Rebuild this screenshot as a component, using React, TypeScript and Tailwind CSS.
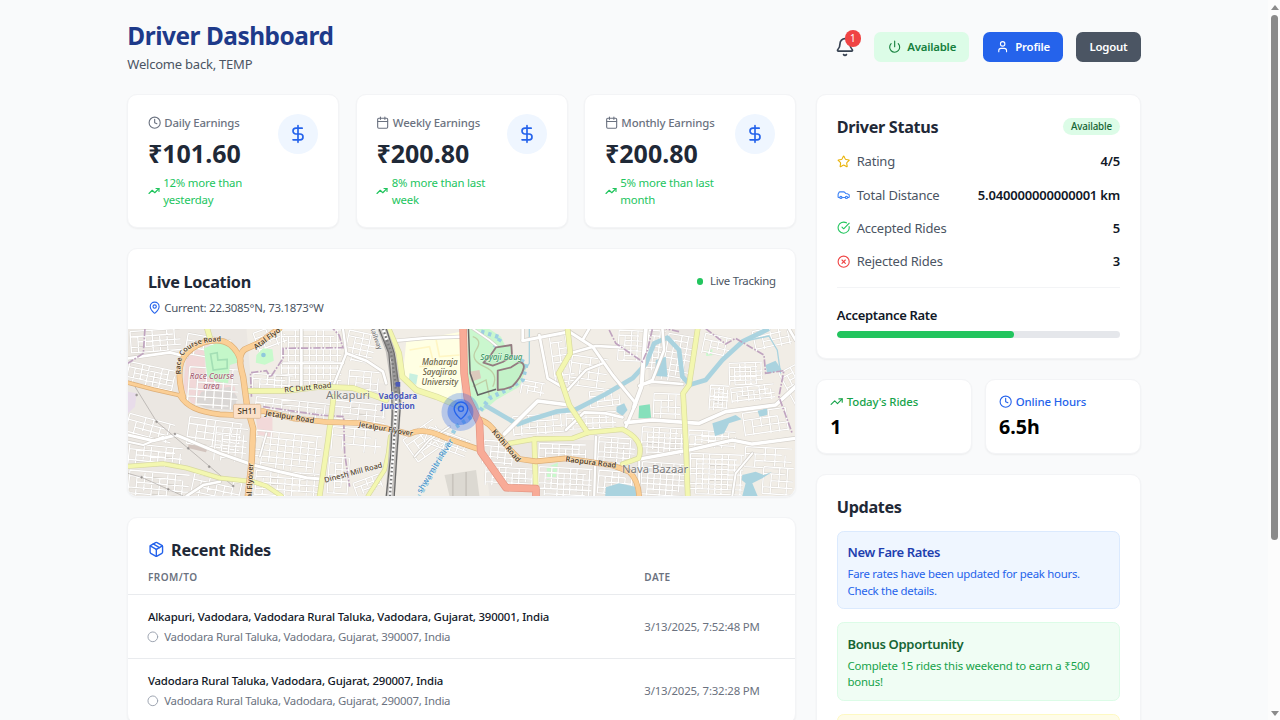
import type { ReactNode } from "react";
import {
  Bell, Calendar, Car, Circle, CircleCheckBig, CircleX, Clock, DollarSign,
  MapPin, Package, Power, Star, TrendingUp, User,
} from "lucide-react";

const card = "rounded-[10px] border border-[#f3f4f6] bg-white shadow-[0_1px_2px_rgba(0,0,0,0.05)]";
const heading = "-mb-px pt-px text-[16.2px] leading-[23.3px] font-bold text-[#1f2937]";

/* ---------- Map ---------- */

type Street = { d: string; w: number };

const whiteRoads: Street[] = [
  { d: "M24 585 L100 602 L170 585 L300 640 L400 675 L480 695 L560 713 L612 718", w: 9 },
  { d: "M24 355 L150 337 L200 350", w: 8 },
  { d: "M24 605 L70 615 L130 590", w: 6 },
  { d: "M545 266 V440", w: 8 },
  { d: "M490 370 H670", w: 6 },
  { d: "M670 266 L680 340 L640 440", w: 7 },
  { d: "M680 340 L740 362 L790 395 L800 430", w: 8 },
  { d: "M830 302 L920 294 L1025 290", w: 8 },
  { d: "M200 768 L250 735 L300 725", w: 8 },
  { d: "M440 580 L420 650", w: 5 },
  { d: "M1170 350 L1110 300 L1060 266", w: 5 },
  { d: "M1210 302 L1350 275 L1420 320 L1480 405 L1550 490 L1520 560", w: 9 },
  { d: "M1260 285 L1285 415 L1345 450", w: 8 },
  { d: "M1345 450 L1400 390 L1450 370", w: 7 },
  { d: "M1155 582 L1255 483 L1350 495", w: 11 },
  { d: "M1580 266 L1567 440 L1545 500", w: 12 },
  { d: "M1630 266 L1635 330 L1600 420 L1560 437 L1600 425 L1690 432", w: 8 },
  { d: "M1340 570 L1395 517 L1460 520 L1510 532", w: 8 },
  { d: "M1520 548 L1600 540 L1740 550 L1820 515 L1970 495 L2030 440", w: 11 },
  { d: "M1560 657 L1710 630 L1840 600 L1900 612 L2030 595", w: 10 },
  { d: "M1353 340 L1430 318 L1510 322", w: 8 },
  { d: "M1430 590 L1425 768", w: 7 },
  { d: "M1210 266 V300", w: 8 },
  { d: "M1390 300 L1410 266", w: 8 },
  { d: "M2010 266 L2030 300", w: 8 },
  { d: "M885 650 L930 600 L990 560", w: 5 },
  { d: "M1560 660 V768", w: 6 },
  { d: "M1840 768 L1850 700 L1900 640", w: 6 },
];

const yellowRoads: Street[] = [
  { d: "M262 266 L272 300", w: 14 },
  { d: "M388 453 L500 452 L600 440 L700 444 L800 480", w: 14 },
  { d: "M642 470 L625 600 L600 768", w: 13 },
  { d: "M24 679 L130 671 L200 684 L300 714 L400 725 L440 738 L485 768", w: 11 },
  { d: "M806 266 L838 340 L848 410 L890 450 L950 470 L1015 497", w: 15 },
  { d: "M745 768 L795 690 L806 640 L812 590", w: 10 },
  { d: "M1345 266 L1353 340 L1318 400 L1350 495 L1405 578", w: 13 },
  { d: "M1170 610 L1245 597 L1360 595 L1405 578 L1510 568 C1555 590 1572 620 1558 655 L1510 672", w: 12 },
  { d: "M1245 597 L1250 768", w: 13 },
  { d: "M1736 266 L1710 435 L1692 460 L1700 600 L1706 768", w: 13 },
];

const orangeRoads: Street[] = [
  { d: "M24 428 L100 448 L180 466", w: 9 },
  { d: "M180 466 C200 500 235 515 300 523 L345 525 L430 513 L520 535 L620 546 L720 549 L800 565 L870 582 C900 565 940 575 975 592 L1020 608 L1085 630", w: 13 },
  { d: "M190 472 C175 420 172 370 200 340 C240 300 300 290 332 315 C352 332 358 345 362 362", w: 14 },
  { d: "M478 266 L420 308 L375 328 C352 345 362 380 370 410 L382 500 L400 565 L396 660 L384 768", w: 15 },
  { d: "M1075 537 C1120 545 1130 590 1200 657 L1250 664 L1340 655 L1480 676 L1530 695 C1552 715 1558 740 1560 768", w: 13 },
];

/* x, y, width, height, rotation, column step, row step */
const blocks: number[][] = [
  [30, 275, 150, 65, -4, 22, 16], [30, 365, 140, 60, 12, 20, 15], [205, 280, 130, 60, 10, 26, 20],
  [210, 380, 150, 120, 4, 26, 22], [400, 280, 90, 60, -20, 20, 18], [485, 270, 180, 165, 0, 21, 19],
  [400, 400, 120, 45, 4, 22, 15], [690, 270, 85, 90, 12, 22, 17], [690, 390, 90, 60, 5, 22, 18],
  [410, 470, 230, 50, 6, 26, 16], [645, 480, 155, 60, 6, 25, 18], [30, 520, 140, 60, 15, 25, 18],
  [30, 610, 160, 60, 6, 22, 16], [210, 530, 160, 80, 8, 26, 20], [290, 560, 95, 100, 5, 21, 18],
  [410, 570, 200, 110, 6, 23, 19], [30, 690, 180, 75, 5, 23, 17], [225, 700, 145, 65, 12, 24, 18],
  [410, 690, 190, 75, 4, 22, 18], [640, 560, 150, 70, 5, 33, 24], [630, 650, 60, 110, 4, 20, 18],
  [700, 730, 80, 40, -20, 20, 15], [850, 600, 110, 80, -35, 26, 20], [930, 560, 130, 50, 20, 20, 16],
  [1095, 600, 90, 70, 5, 22, 16], [1100, 680, 140, 55, 3, 20, 15], [1180, 530, 160, 60, -4, 24, 18],
  [1260, 610, 140, 45, 2, 20, 14], [1260, 680, 160, 85, 3, 19, 16], [1440, 590, 110, 75, 4, 19, 15],
  [1440, 690, 100, 70, 5, 20, 17], [1340, 520, 150, 50, -2, 20, 16], [1410, 455, 90, 50, -6, 22, 16],
  [1290, 290, 60, 140, -8, 24, 20], [1360, 345, 110, 90, 8, 28, 22], [1210, 420, 70, 40, 10, 20, 14],
  [1500, 270, 80, 90, 3, 19, 15], [1590, 270, 50, 120, 5, 17, 16], [1650, 280, 80, 140, 10, 20, 18],
  [1605, 460, 80, 75, 2, 22, 20], [1570, 560, 125, 80, 3, 17, 15], [1570, 665, 130, 100, 4, 19, 16],
  [1710, 570, 140, 50, 3, 20, 14], [1715, 640, 160, 120, 2, 19, 15], [1775, 435, 55, 75, 4, 13, 11],
  [1830, 370, 100, 65, -2, 16, 13], [1835, 445, 130, 45, -6, 17, 13], [1870, 520, 130, 70, -8, 26, 22],
  [1880, 620, 140, 60, 3, 30, 20], [1935, 680, 90, 80, 4, 24, 20], [1980, 400, 60, 180, -28, 19, 17],
  [1760, 280, 80, 60, 12, 22, 18], [1900, 275, 110, 60, -12, 26, 18],
];

const blockPath = ([, , w, h, , sx, sy]: number[]) => {
  let d = "";
  for (let x = 0, i = 0; x <= w; x += sx, i++) d += `M${x} ${i % 3 === 1 ? sy : 0}V${i % 4 === 2 ? h - sy : h}`;
  for (let y = 0, i = 0; y <= h; y += sy, i++) d += `M${i % 3 === 2 ? sx : 0} ${y}H${i % 4 === 1 ? w - sx : w}`;
  return d;
};

function Roads({ items, casing, fill }: { items: Street[]; casing: string; fill: string }) {
  return (
    <g fill="none" strokeLinejoin="round" strokeLinecap="round">
      {items.map((r, i) => <path key={i} d={r.d} stroke={casing} strokeWidth={r.w + 4} />)}
      {items.map((r, i) => <path key={i} d={r.d} stroke={fill} strokeWidth={r.w} />)}
    </g>
  );
}

function CityMap() {
  return (
    <svg viewBox="24 267 2004 500" preserveAspectRatio="none" className="block h-[166.7px] w-full font-['Noto_Sans',sans-serif]">
      <rect x="20" y="260" width="2020" height="520" fill="#f1ede6" />
      <path d="M24 266H380L400 500V768H24Z M1090 600H1700V768H1110Z M1580 266H1730L1700 440H1590Z" fill="#ebe7e2" />
      <path d="M400 430H800V540L620 545L400 510Z" fill="#ede9e4" />

      {/* land use */}
      <path d="M200 345L255 320V410L345 440L350 495L290 505L215 490L190 440Z" fill="#f1d8d8" />
      <path d="M245 455L330 440L352 470L345 510L260 505L225 490Z" fill="#dad7d5" />
      <path d="M408 530H458V592L415 585Z" fill="#f2d9d9" />
      <path d="M208 603L268 617L258 637L204 624Z" fill="#d3c5bf" />
      <path d="M860 305L1025 275V490L910 455L850 405Z" fill="#ffffe3" />
      <path d="M870 400L895 405L890 435L868 420Z" fill="#c8f0e0" />
      <path d="M24 455L50 460L45 500L24 520Z" fill="#e8dcea" />
      <path d="M1045 267H1110L1145 290L1170 345L1225 375L1200 440L1130 480L1090 515L1060 500L1045 430Z" fill="#caf7ce" />
      <path d="M1050 395L1080 390L1085 415L1055 425Z" fill="#dccabd" />
      <path d="M975 705L1070 690L1080 768H990Z" fill="#dcd9d2" />
      <path d="M1000 702V768M1040 696V768" stroke="#c9c5be" strokeWidth="5" />
      <path d="M1282 682L1316 668L1310 710L1284 720Z" fill="#c8facc" />
      <path d="M1560 497L1592 493L1596 535L1558 535Z" fill="#86e0bb" />
      <path d="M1760 333L1780 328V346L1762 348Z" fill="#c8facc" />

      {/* minor streets */}
      <g fill="none">
        {blocks.map((b, i) => (
          <g key={i} transform={`translate(${b[0]} ${b[1]}) rotate(${b[4]})`}>
            <path d={blockPath(b)} stroke="#d6d2cc" strokeWidth="6" />
            <path d={blockPath(b)} stroke="#fff" strokeWidth="4" />
          </g>
        ))}
        <path d="M870 330L930 320L940 360M900 380L1000 370M950 300L960 350L1020 345" stroke="#fff6c4" strokeWidth="5" />
        <path d="M1060 290Q1090 300 1070 330T1095 380T1120 440M1060 440L1100 420L1110 470" stroke="#bfcfa6" strokeWidth="4" />
      </g>

      {/* parks over the street mesh */}
      <path d="M252 325L300 305L335 318L352 345V368L330 375L325 430L290 425L262 408Z" fill="#c4f7c9" />
      <path d="M272 342L292 338L294 360L322 358V385L280 390Z" fill="none" stroke="#a4dfb5" strokeWidth="5" />
      <path d="M410 345L430 325L458 328L462 362L435 374L408 368Z" fill="#c8facc" />
      <circle cx="431" cy="345" r="7" fill="#8fc9dc" />

      {/* water */}
      <g fill="none" stroke="#aad3df" strokeLinejoin="round">
        <path d="M1095 495L1195 553L1230 540L1310 515L1370 508L1460 462L1540 415L1580 372L1605 310L1645 293L1680 330L1690 410L1712 434L1760 420L1810 360L1870 305L1950 266" strokeWidth="14" />
        <path d="M1870 305L1950 288L1975 330L1985 400" strokeWidth="4" />
        <path d="M1230 266V370L1205 400" strokeWidth="4" />
        <path d="M1085 275L1145 293L1120 330L1170 345L1222 370L1210 420L1160 450L1110 475L1080 515L1010 560L985 610L940 700L900 768" stroke="#9ccfe2" strokeWidth="13" strokeDasharray="10 12" />
      </g>
      <g fill="#aad3df">
        <path d="M1610 360L1640 350L1645 410L1608 408Z" />
        <path d="M1492 500L1515 490L1525 510L1510 528L1492 515Z" />
        <path d="M1780 550L1810 540L1850 525L1868 538L1830 550L1815 580L1788 588Z" />
        <path d="M1916 512L1945 505V525L1922 530Z" />
        <path d="M1460 742L1500 730L1548 740L1552 768H1458Z" />
        <path d="M1870 705L1910 695L1935 705L1960 695L1930 715L1900 730L1916 768H1870L1880 730L1868 720Z" />
        <path d="M1940 375L1970 362L1988 390L1945 402Z" />
      </g>

      <Roads items={whiteRoads} casing="#d4d0ca" fill="#fff" />

      {/* boundaries */}
      <g fill="none" stroke="#bfa3bf" strokeWidth="5" strokeDasharray="22 5 5 5">
        <path d="M75 266L70 340L24 370M395 470L392 398L440 392L452 412L490 355V325L670 323L658 285L640 266M430 500L600 525L672 530L675 640L690 740" />
        <path d="M1470 270L1490 310L1570 365L1585 330L1600 266M1680 275L1640 266M1760 266L1820 312L1850 295L1935 345L1940 400L1995 392L1980 470L2020 580" />
      </g>

      {/* power lines */}
      <g stroke="#a9a5a1" strokeWidth="2" fill="#8b8886">
        <path d="M45 440L110 545L205 625L270 680L340 738M24 700L65 712L145 748L190 768" fill="none" />
        {[[50, 465], [110, 545], [165, 582], [205, 625], [268, 680], [340, 738], [65, 712], [145, 748]].map(([x, y]) => (
          <circle key={x} cx={x} cy={y} r="3" />
        ))}
      </g>

      <Roads items={yellowRoads} casing="#d8d9a0" fill="#f3f7b0" />
      <Roads items={orangeRoads} casing="#dcae78" fill="#fbcf96" />
      <Roads items={[{ d: "M1031 260L1034 400L1044 475L1080 548L1084 635L1160 743L1250 746V775", w: 19 }]} casing="#e39583" fill="#f8ab97" />

      {/* railway */}
      <g fill="none">
        <path d="M788 266L812 330L826 420L832 480L824 600L812 768" stroke="#c4c1be" strokeWidth="28" />
        <path d="M778 266L808 340L816 440L818 520L814 640L800 768M800 266L824 340L838 440L842 500L832 640L824 768" stroke="#666" strokeWidth="3.5" />
        <path d="M790 266L814 335L828 430L830 500L822 620L811 768" stroke="#fff" strokeWidth="9" />
        <path d="M790 266L814 335L828 430L830 500L822 620L811 768" stroke="#777" strokeWidth="7" strokeDasharray="5 7" />
        <path d="M800 300L822 360L830 460" stroke="#7b7979" strokeWidth="15" strokeOpacity=".75" />
        <path d="M1047 266L1052 400L1075 465L1130 448" stroke="#666" strokeWidth="4.5" />
      </g>
      <rect x="828" y="426" width="14" height="14" fill="#4d5bb5" />

      {/* ghats in the park */}
      <g fill="#c3f2c8" stroke="#937b80" strokeWidth="5.5" strokeLinejoin="round">
        <path d="M1092 368L1112 348L1130 322L1176 315L1178 348L1150 366L1120 377Z" />
        <path d="M1135 392L1175 382L1200 366Q1216 368 1213 385Q1206 412 1180 438Q1160 448 1135 450Z" />
      </g>

      {/* labels */}
      <g fontSize="22.5" fontWeight="600" fill="#54452f" stroke="#fff" strokeOpacity=".55" strokeWidth="3" paintOrder="stroke" textAnchor="middle">
        <path id="race-course" d="M184 402C172 340 210 303 315 304" fill="none" stroke="none" />
        <text textAnchor="start" fontSize="21"><textPath href="#race-course">Race Course Road</textPath></text>
        <text transform="translate(446 302) rotate(-37)">Atal Flyo</text>
        <text transform="translate(398 722) rotate(-88)">al Flyover</text>
        <text transform="translate(565 450) rotate(-6)" fontWeight="500">RC Dutt Road</text>
        <text transform="translate(509 538) rotate(9)">Jetalpur Road</text>
        <text transform="translate(798 574) rotate(10)" fontSize="21.5">Jetalpur Flyover</text>
        <text transform="translate(703 705) rotate(-15)" fontWeight="500">Dinesh Mill Road</text>
        <text transform="translate(1155 622) rotate(50)">Kothi Road</text>
        <text transform="translate(1414 674) rotate(7)">Raopura Road</text>
        <text transform="translate(763 297) rotate(70)" fill="#777" fontSize="20" fontWeight="500">Railway</text>
        <g fill="#a86478" fontStyle="italic" fontWeight="500" fontSize="24">
          <text x="276" y="417">Race Course</text><text x="275" y="447">area</text>
        </g>
        <g fill="#6b6440" fontStyle="italic" fontWeight="500" fontSize="24.5">
          <text x="961" y="374">Maharaja</text><text x="961" y="404">Sayajirao</text><text x="961" y="434">University</text>
        </g>
        <text x="1146" y="361" fill="#3f9a68" fontStyle="italic" fontWeight="500" fontSize="24">Sayaji Baug</text>
        <g fill="#4a58bb" fontWeight="700" fontSize="24.5">
          <text x="835" y="476">Vadodara</text><text x="835" y="506">Junction</text>
        </g>
        <g fill="#7c7c7c" fontWeight="400" fontSize="34">
          <text x="685" y="478">Alkapuri</text><text x="1608" y="699">Nava Bazaar</text>
        </g>
        <text transform="translate(954 682) rotate(-58)" fill="#4b93c8" fontWeight="500" fontSize="25">shwamitri River</text>
      </g>
      <rect x="341" y="493" width="82" height="42" rx="4" fill="#fbe0c8" stroke="#d8b48c" strokeWidth="2" />
      <text x="382" y="523" textAnchor="middle" fontSize="24" fontWeight="500" fill="#4a3c2a">SH11</text>

      {/* driver position */}
      <circle cx="1023" cy="516" r="57" fill="#2563eb" fillOpacity=".28" />
      <circle cx="1023" cy="516" r="39" fill="#2563eb" fillOpacity=".45" />
      <MapPin x={994} y={481} width={61} height={61} color="#2563eb" strokeWidth={1.6} />
    </svg>
  );
}

/* ---------- Panels ---------- */

function EarningsCard({ icon, label, amount, change }: { icon: ReactNode; label: string; amount: string; change: string }) {
  return (
    <div className={`${card} flex h-[134.2px] flex-1 items-start justify-between pt-[19.2px] pr-[20px] pl-[19.6px]`}>
      <div>
        <div className="flex h-[16.7px] items-center gap-[3px] text-[11.4px] font-medium tracking-[-0.014em] whitespace-nowrap text-[#6b7280]">
          {icon}{label}
        </div>
        <div className="mt-[7.5px] text-[25px] leading-[30px] font-bold text-[#1f2937]">{amount}</div>
        <div className="mt-[7.2px] flex items-center gap-[3.3px] text-[11.4px] leading-[16.7px] tracking-[-0.018em] text-[#22c55e]">
          <TrendingUp size={12} className="mb-[2px] shrink-0" strokeWidth={2.3} />
          <span className="w-[98px]">{change}</span>
        </div>
      </div>
      <div className="-ml-2 flex size-10 shrink-0 items-center justify-center rounded-full bg-[#eff6ff] text-[#2563eb]">
        <DollarSign size={20} />
      </div>
    </div>
  );
}

function StatusRow({ icon, label, value }: { icon: ReactNode; label: string; value: string }) {
  return (
    <div className="flex h-5 items-center justify-between text-[13px] leading-5">
      <div className="flex items-center gap-[6.5px] tracking-[-0.015em] text-[#4b5563]">{icon}{label}</div>
      <div className="font-semibold tracking-[-0.015em] text-[#111827]">{value}</div>
    </div>
  );
}

function Ride({ from, to, date }: { from: string; to: string; date: string }) {
  return (
    <div className="flex items-center border-b border-[#e9ebee] px-[19.6px] pt-[13.8px] pb-[12.4px] text-[11.4px] leading-[16.7px] whitespace-nowrap">
      <div className="w-[496.4px]">
        <div className="font-medium tracking-[-0.016em] text-[#111827]">{from}</div>
        <div className="mt-[3.3px] flex items-center gap-[5.6px] tracking-[-0.023em] text-[#6b7280]">
          <Circle size={11.67} className="-ml-px text-[#9ca3af]" />{to}
        </div>
      </div>
      <div className="tracking-[-0.015em] text-[#6b7280]">{date}</div>
    </div>
  );
}

function Header() {
  return (
    <header className="flex h-[53.3px] items-center justify-between">
      <div className="pt-[1.6px]">
        <h1 className="text-[24.4px] leading-[30px] font-bold tracking-[-0.019em] text-[#1e3a8a]">Driver Dashboard</h1>
        <p className="mt-[3.3px] text-[13px] leading-5 tracking-[-0.017em] text-[#4b5563]">Welcome back, TEMP</p>
      </div>
      <div className="flex items-center gap-[13.1px] text-[11.4px] leading-[16.7px] font-semibold">
        <div className="relative p-[6.7px] text-[#374151]">
          <Bell size={20} />
          <span className="absolute top-0 right-0 flex size-[16.7px] items-center justify-center rounded-full bg-[#ef4444] pt-px text-[10px] font-normal text-white">1</span>
        </div>
        <button className="flex h-[30px] items-center gap-[6.3px] rounded-[6.7px] bg-[#dcfce7] px-[13.3px] text-[#15803d]"><Power size={13.33} /><span className="pt-[2.2px] tracking-[-0.018em]">Available</span></button>
        <button className="flex h-[30px] items-center gap-[6.3px] rounded-[6.7px] bg-[#2563eb] px-[13px] text-white"><User size={13.33} /><span className="pt-[2.2px] tracking-[-0.014em]">Profile</span></button>
        <button className="h-[30px] rounded-[6.7px] bg-[#4b5563] px-[13.2px] pt-[2.2px] tracking-[-0.018em] text-white">Logout</button>
      </div>
    </header>
  );
}

export default function App() {
  return (
    <div className="flex h-[720px] w-full overflow-hidden bg-[#f9fafb] font-['Noto_Sans','Open_Sans',sans-serif]">
      <div className="min-w-0 flex-1">
        <div className="mx-auto w-[1013.3px] pt-5">
          <Header />
          <div className="mt-[20.5px] grid grid-cols-[668.9px_324.4px] items-start gap-5">
            <main className="flex min-w-0 flex-col gap-5">
              <div className="flex gap-[16.7px]">
                <EarningsCard icon={<Clock size={13.33} />} label="Daily Earnings" amount="₹101.60" change="12% more than yesterday" />
                <EarningsCard icon={<Calendar size={13.33} />} label="Weekly Earnings" amount="₹200.80" change="8% more than last week" />
                <EarningsCard icon={<Calendar size={13.33} />} label="Monthly Earnings" amount="₹200.80" change="5% more than last month" />
              </div>

              <section className={`${card} overflow-hidden`}>
                <div className="px-[19.6px] pt-[20.7px] pb-[12.6px]">
                  <div className="flex items-center justify-between">
                    <h2 className={`${heading} tracking-[-0.018em]`}>Live Location</h2>
                    <div className="flex items-center gap-[6.7px] text-[11.4px] leading-[16.7px] tracking-[-0.024em] text-[#4b5563]">
                      <span className="size-[6.7px] rounded-full bg-[#22c55e]" />Live Tracking
                    </div>
                  </div>
                  <div className="mt-[6.7px] flex items-center gap-[3px] text-[11.4px] leading-[16.7px] tracking-[-0.021em] text-[#4b5563]">
                    <MapPin size={13.33} className="text-[#2563eb]" />Current: 22.3085°N, 73.1873°W
                  </div>
                </div>
                <CityMap />
              </section>

              <section className={`${card} overflow-hidden`}>
                <div className="flex items-center gap-[6.5px] px-[19.6px] pt-5">
                  <Package size={16.67} className="text-[#2563eb]" />
                  <h2 className={`${heading} tracking-[-0.019em]`}>Recent Rides</h2>
                </div>
                <div className="flex border-b border-[#e9ebee] px-[19.6px] py-[9.8px] text-[10px] leading-[13.3px] font-semibold tracking-[0.046em] text-[#6b7280]">
                  <div className="w-[496.4px]">FROM/TO</div>
                  <div>DATE</div>
                </div>
                <Ride from="Alkapuri, Vadodara, Vadodara Rural Taluka, Vadodara, Gujarat, 390001, India" to="Vadodara Rural Taluka, Vadodara, Gujarat, 390007, India" date="3/13/2025, 7:52:48 PM" />
                <Ride from="Vadodara Rural Taluka, Vadodara, Gujarat, 290007, India" to="Vadodara Rural Taluka, Vadodara, Gujarat, 290007, India" date="3/13/2025, 7:32:28 PM" />
              </section>
            </main>

            <aside className="flex flex-col gap-5">
              <section className={`${card} px-[19.6px] py-5`}>
                <div className="flex items-center justify-between">
                  <h2 className={`${heading} tracking-[-0.02em]`}>Driver Status</h2>
                  <span className="rounded-full bg-[#dcfce7] px-2 py-[1.7px] text-[9.8px] leading-[13.3px] font-medium tracking-[-0.015em] text-[#166534]">Available</span>
                </div>
                <div className="mt-[13.3px] flex flex-col gap-[13.3px]">
                  <StatusRow icon={<Star size={13.33} className="text-[#eab308]" />} label="Rating" value="4/5" />
                  <StatusRow icon={<Car size={13.33} className="text-[#3b82f6]" />} label="Total Distance" value="5.040000000000001 km" />
                  <StatusRow icon={<CircleCheckBig size={13.33} className="text-[#22c55e]" />} label="Accepted Rides" value="5" />
                  <StatusRow icon={<CircleX size={13.33} className="text-[#ef4444]" />} label="Rejected Rides" value="3" />
                </div>
                <div className="mt-[16px] border-t border-[#f3f4f6] pt-[16.7px]">
                  <div className="text-[13px] leading-5 font-semibold tracking-[-0.025em] text-[#111827]">Acceptance Rate</div>
                  <div className="mt-[6.2px] h-[6.7px] overflow-hidden rounded-full bg-[#e5e7eb]">
                    <div className="h-full w-[62.5%] rounded-full bg-[#22c55e]" />
                  </div>
                </div>
              </section>

              <div className="grid grid-cols-2 gap-[13.3px]">
                <div className={`${card} h-[74.9px] px-[13px] pt-[13.9px]`}>
                  <div className="flex items-center gap-[3.3px] text-[11.4px] leading-[16.7px] font-medium tracking-[-0.011em] text-[#16a34a]"><TrendingUp size={13.33} />Today's Rides</div>
                  <div className="mt-[3.5px] text-[19.6px] leading-[26.7px] font-bold text-black">1</div>
                </div>
                <div className={`${card} h-[74.9px] px-[13px] pt-[13.9px]`}>
                  <div className="flex items-center gap-[3.3px] text-[11.4px] leading-[16.7px] font-medium tracking-[-0.011em] text-[#2563eb]"><Clock size={13.33} />Online Hours</div>
                  <div className="mt-[3.5px] text-[19.6px] leading-[26.7px] font-bold text-black">6.5h</div>
                </div>
              </div>

              <section className={`${card} px-[19.6px] py-5`}>
                <h2 className={`${heading} tracking-[-0.022em]`}>Updates</h2>
                <div className="mt-[13px] flex flex-col gap-[13.3px] text-[11.4px] leading-[16.7px]">
                  <article className="rounded-[6.7px] border border-[#dbeafe] bg-[#eff6ff] px-[9.7px] pt-[10.2px] pb-[8.4px]">
                    <h3 className="text-[13px] leading-5 font-semibold tracking-[-0.03em] text-[#1e40af]">New Fare Rates</h3>
                    <p className="mt-[4px] tracking-[-0.023em] text-[#2563eb]">Fare rates have been updated for peak hours.<br />Check the details.</p>
                  </article>
                  <article className="rounded-[6.7px] border border-[#dcfce7] bg-[#f0fdf4] px-[9.7px] pt-[10.2px] pb-[8.6px]">
                    <h3 className="text-[13px] leading-5 font-semibold tracking-[-0.024em] text-[#166534]">Bonus Opportunity</h3>
                    <p className="mt-[4px] tracking-[-0.017em] text-[#16a34a]">Complete 15 rides this weekend to earn a ₹500<br />bonus!</p>
                  </article>
                  <div className="h-[78px] rounded-[6.7px] border border-[#fef9c3] bg-[#fefce8]" />
                </div>
              </section>
            </aside>
          </div>
        </div>
      </div>

      {/* scrollbar */}
      <div className="flex w-3 shrink-0 flex-col items-center bg-[#fcfcfc] pl-px">
        <svg viewBox="0 0 8 5" className="mt-[5px] h-[5px] w-2 shrink-0"><path d="M0 5L4 0L8 5Z" fill="#8a8a8a" /></svg>
        <div className="mt-[5px] h-[525px] w-[7.5px] shrink-0 rounded-full bg-[#8a8a8a]" />
        <svg viewBox="0 0 8 5" className="mt-auto mb-[4px] h-[5px] w-2 shrink-0"><path d="M0 0L4 5L8 0Z" fill="#8a8a8a" /></svg>
      </div>
    </div>
  );
}
